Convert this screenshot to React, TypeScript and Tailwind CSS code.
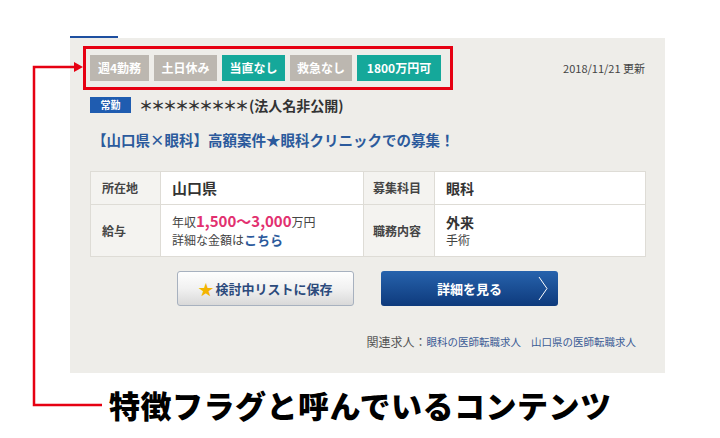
import React from "react";

const tags = [
  { label: "週4勤務", on: false, w: "w-[59px]" },
  { label: "土日休み", on: false, w: "w-[63px]" },
  { label: "当直なし", on: true, w: "w-[63px]" },
  { label: "救急なし", on: false, w: "w-[62px]" },
  { label: "1800万円可", on: true, w: "w-[84px]" },
];

export default function App() {
  return (
    <div className="relative w-[720px] h-[438px] bg-white overflow-hidden font-['Noto_Sans_CJK_JP',sans-serif] text-[#333]">
      <div className="pt-[36px] pl-[70px]">
        <div className="w-[48px] h-[2px] bg-[#1e4fa0]" />
        <div className="w-[595px] h-[335px] bg-[#eeede9] px-[20px] pt-[17px]">
          {/* flags row */}
          <div className="flex items-center justify-between h-[26px]">
            <div className="flex gap-[5px]">
              {tags.map((t) => (
                <div
                  key={t.label}
                  className={`${t.w} h-[26px] flex items-center justify-center text-[12px] font-bold text-white leading-none ${
                    t.on ? "bg-[#15a89a]" : "bg-[#bcb7b0]"
                  }`}
                >
                  {t.label}
                </div>
              ))}
            </div>
            <div className="text-[11px] text-[#444] leading-none">2018/11/21 更新</div>
          </div>
          {/* company row */}
          <div className="flex items-center mt-[15px] h-[18px]">
            <div className="w-[41px] h-[16px] bg-[#1f5cb0] text-white text-[10px] font-bold flex items-center justify-center leading-none">
              常勤
            </div>
            <div className="ml-[8px] text-[14px] font-bold text-[#333] leading-none">
              <span className="tracking-[-2px]">＊＊＊＊＊＊＊＊＊</span>
              <span className="ml-[2px]">(法人名非公開)</span>
            </div>
          </div>
          {/* title */}
          <div className="mt-[16px] ml-[2px] text-[14.5px] font-bold text-[#2b5a9c] leading-[20px]">
            【山口県×眼科】高額案件★眼科クリニックでの募集！
          </div>
          {/* table */}
          <table className="mt-[21px] w-[555px] border-collapse text-[12px] table-fixed">
            <colgroup>
              <col className="w-[70px]" />
              <col className="w-[203px]" />
              <col className="w-[71px]" />
              <col className="w-[211px]" />
            </colgroup>
            <tbody>
              <tr className="h-[33px]">
                <th className="border border-[#dedcd6] bg-[#f4f3f0] text-left pl-[11px] font-bold text-[#444] text-[12px]">所在地</th>
                <td className="border border-[#dedcd6] bg-white pl-[11px] font-bold text-[15px] text-[#333]">山口県</td>
                <th className="border border-[#dedcd6] bg-[#f4f3f0] text-left pl-[9px] font-bold text-[#444] text-[12px]">募集科目</th>
                <td className="border border-[#dedcd6] bg-white pl-[11px] font-bold text-[14px] text-[#333]">眼科</td>
              </tr>
              <tr className="h-[52px]">
                <th className="border border-[#dedcd6] bg-[#f4f3f0] text-left pl-[11px] font-bold text-[#444] text-[12px]">給与</th>
                <td className="border border-[#dedcd6] bg-white pl-[11px] text-[#444]">
                  <div className="leading-[18px] text-[12px]">
                    年収<span className="text-[15px] font-bold text-[#e2306f]">1,500～3,000</span>万円
                  </div>
                  <div className="leading-[18px] text-[12px]">
                    詳細な金額は<span className="font-bold text-[13px] text-[#2b5a9c]">こちら</span>
                  </div>
                </td>
                <th className="border border-[#dedcd6] bg-[#f4f3f0] text-left pl-[9px] font-bold text-[#444] text-[12px]">職務内容</th>
                <td className="border border-[#dedcd6] bg-white pl-[11px] text-[#444]">
                  <div className="leading-[18px] text-[14px] font-bold text-[#333]">外来</div>
                  <div className="leading-[18px] text-[12px]">手術</div>
                </td>
              </tr>
            </tbody>
          </table>
          {/* buttons */}
          <div className="mt-[14px] flex justify-center gap-[27px]">
            <button className="w-[177px] h-[35px] rounded-[3px] border border-[#a7b1bf] bg-gradient-to-b from-[#fefefe] via-[#f1f1f1] to-[#d9d9d9] flex items-center justify-center text-[13px] font-bold text-[#2c4a7c]">
              <span className="text-[#f3b400] text-[15px] mr-[2px] leading-none">★</span>
              検討中リストに保存
            </button>
            <button className="relative w-[177px] h-[35px] rounded-[3px] bg-gradient-to-b from-[#2763ad] to-[#0e3a7c] flex items-center justify-center text-[13px] font-bold text-white">
              詳細を見る
              <svg className="absolute right-[10px] top-[5px]" width="10" height="25" viewBox="0 0 10 25">
                <polyline points="1,1 9,12.5 1,24" fill="none" stroke="#ffffff" strokeWidth="1" />
              </svg>
            </button>
          </div>
          {/* related */}
          <div className="mt-[30px] flex justify-end items-center pr-[9px] leading-none">
            <span className="text-[12px] text-[#555]">関連求人：</span>
            <span className="text-[10.5px] text-[#3b5b95]">眼科の医師転職求人</span>
            <span className="text-[10.5px] text-[#3b5b95] ml-[10px]">山口県の医師転職求人</span>
          </div>
        </div>
      </div>

      {/* annotation overlay */}
      <div className="absolute left-[83px] top-[46px] w-[370px] h-[44px] border-[3px] border-[#e60012]" />
      <svg className="absolute left-0 top-0" width="720" height="438" viewBox="0 0 720 438">
        <polyline points="102,405 34,405 34,67 76,67" fill="none" stroke="#e60012" strokeWidth="2.5" />
        <polygon points="74,62 83,67 74,72" fill="#e60012" />
      </svg>
      <div className="absolute left-[109px] top-[386px] text-[31px] font-black text-black leading-[38px] tracking-[0.5px] font-['Noto_Sans_CJK_JP',sans-serif]">
        特徴フラグと呼んでいるコンテンツ
      </div>
    </div>
  );
}
